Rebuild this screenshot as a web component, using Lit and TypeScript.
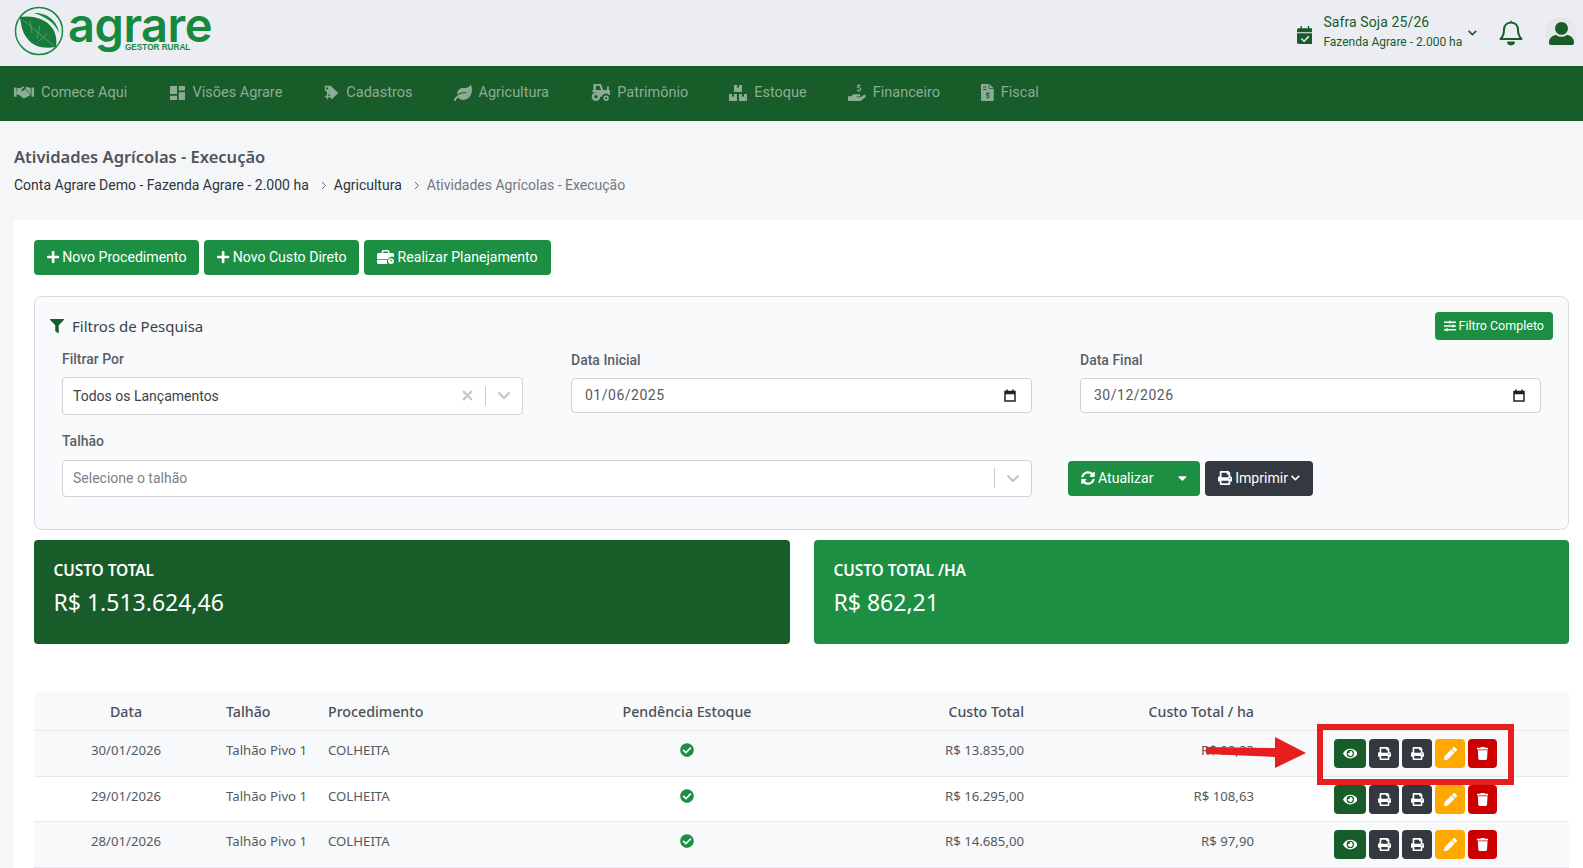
import { LitElement, html, css, svg } from "lit";
import { customElement } from "lit/decorators.js";

const P = {
  plus: ["0 0 448 512", "M416 208H272V64c0-17.67-14.33-32-32-32h-32c-17.67 0-32 14.33-32 32v144H32c-17.67 0-32 14.33-32 32v32c0 17.67 14.33 32 32 32h144v144c0 17.67 14.33 32 32 32h32c17.67 0 32-14.33 32-32V304h144c17.67 0 32-14.33 32-32v-32c0-17.67-14.33-32-32-32z"],
  print: ["0 0 512 512", "M448 192V77.25c0-8.49-3.37-16.62-9.37-22.63L393.37 9.37c-6-6-14.14-9.37-22.63-9.37H96C78.33 0 64 14.33 64 32v160c-35.35 0-64 28.65-64 64v112c0 8.84 7.16 16 16 16h48v96c0 17.67 14.33 32 32 32h320c17.67 0 32-14.33 32-32v-96h48c8.84 0 16-7.16 16-16V256c0-35.35-28.65-64-64-64zm-64 256H128v-96h256v96zm0-224H128V64h192v48c0 8.84 7.16 16 16 16h48v96zm48 72c-13.25 0-24-10.75-24-24 0-13.26 10.75-24 24-24s24 10.74 24 24c0 13.25-10.75 24-24 24z"],
  eye: ["0 0 576 512", "M572.52 241.4C518.29 135.59 410.93 64 288 64S57.68 135.64 3.48 241.41a32.35 32.35 0 0 0 0 29.19C57.71 376.41 165.07 448 288 448s230.32-71.64 284.52-177.41a32.35 32.35 0 0 0 0-29.19zM288 400a144 144 0 1 1 144-144 143.93 143.93 0 0 1-144 144zm0-240a95.31 95.31 0 0 0-25.31 3.79 47.85 47.85 0 0 1-66.9 66.9A95.78 95.78 0 1 0 288 160z"],
  trash: ["0 0 448 512", "M432 32H312l-9.4-18.7A24 24 0 0 0 281.1 0H166.8a23.72 23.72 0 0 0-21.4 13.3L136 32H16A16 16 0 0 0 0 48v32a16 16 0 0 0 16 16h416a16 16 0 0 0 16-16V48a16 16 0 0 0-16-16zM53.2 467a48 48 0 0 0 47.9 45h245.8a48 48 0 0 0 47.9-45L416 128H32z"],
  pencil: ["0 0 512 512", "M497.9 142.1l-46.1 46.1c-4.7 4.7-12.3 4.7-17 0l-111-111c-4.7-4.7-4.7-12.3 0-17l46.1-46.1c18.7-18.7 49.1-18.7 67.9 0l60.1 60.1c18.8 18.7 18.8 49.1 0 67.9zM284.2 99.8L21.6 362.4.4 483.9c-2.9 16.4 11.4 30.6 27.8 27.8l121.5-21.3 262.6-262.6c4.7-4.7 4.7-12.3 0-17l-111-111c-4.8-4.7-12.4-4.7-17.1 0z"],
  check: ["0 0 512 512", "M504 256c0 136.967-111.033 248-248 248S8 392.967 8 256 119.033 8 256 8s248 111.033 248 248zM227.314 387.314l184-184c6.248-6.248 6.248-16.379 0-22.627l-22.627-22.627c-6.248-6.249-16.379-6.249-22.628 0L216 308.118l-70.059-70.059c-6.248-6.248-16.379-6.248-22.628 0l-22.627 22.627c-6.248 6.248-6.248 16.379 0 22.627l104 104c6.249 6.249 16.379 6.249 22.628.001z"],
  filter: ["0 0 512 512", "M487.976 0H24.028C2.71 0-8.047 25.866 7.058 40.971L192 225.941V432c0 7.831 3.821 15.17 10.237 19.662l80 55.98C298.02 518.69 320 507.493 320 487.98V225.941l184.947-184.97C520.021 25.896 509.338 0 487.976 0z"],
  sliders: ["0 0 512 512", "M496 384H160v-16c0-8.8-7.2-16-16-16h-32c-8.8 0-16 7.2-16 16v16H16c-8.8 0-16 7.2-16 16v32c0 8.8 7.2 16 16 16h80v16c0 8.8 7.2 16 16 16h32c8.8 0 16-7.2 16-16v-16h336c8.8 0 16-7.2 16-16v-32c0-8.8-7.2-16-16-16zm0-160h-80v-16c0-8.8-7.2-16-16-16h-32c-8.8 0-16 7.2-16 16v16H16c-8.8 0-16 7.2-16 16v32c0 8.8 7.2 16 16 16h336v16c0 8.8 7.2 16 16 16h32c8.8 0 16-7.2 16-16v-16h80c8.8 0 16-7.2 16-16v-32c0-8.8-7.2-16-16-16zm0-160H288V48c0-8.8-7.2-16-16-16h-32c-8.8 0-16 7.2-16 16v16H16C7.2 64 0 71.2 0 80v32c0 8.8 7.2 16 16 16h208v16c0 8.8 7.2 16 16 16h32c8.8 0 16-7.2 16-16v-16h208c8.8 0 16-7.2 16-16V80c0-8.8-7.2-16-16-16z"],
  sync: ["0 0 512 512", "M370.72 133.28C339.458 104.008 298.888 87.962 255.848 88c-77.458.068-144.328 53.178-162.791 126.85-1.344 5.363-6.122 9.15-11.651 9.15H24.103c-7.498 0-13.194-6.807-11.807-14.176C33.933 94.924 134.813 8 256 8c66.448 0 126.791 26.136 171.315 68.685L463.03 40.97C478.149 25.851 504 36.559 504 57.941V192c0 13.255-10.745 24-24 24H345.941c-21.382 0-32.09-25.851-16.971-40.971l41.75-41.749zM32 296h134.059c21.382 0 32.09 25.851 16.971 40.971l-41.75 41.75c31.262 29.273 71.835 45.319 114.876 45.28 77.418-.07 144.315-53.144 162.787-126.849 1.344-5.363 6.122-9.15 11.651-9.15h57.304c7.498 0 13.194 6.807 11.807 14.176C478.067 417.076 377.187 504 256 504c-66.448 0-126.791-26.136-171.315-68.685L48.97 471.03C33.851 486.149 8 475.441 8 454.059V320c0-13.255 10.745-24 24-24z"],
  chevron: ["0 0 448 512", "M207.029 381.476L12.686 187.132c-9.373-9.373-9.373-24.569 0-33.941l22.667-22.667c9.357-9.357 24.522-9.375 33.901-.04L224 284.505l154.745-154.021c9.379-9.335 24.544-9.317 33.901.04l22.667 22.667c9.373 9.373 9.373 24.569 0 33.941L240.971 381.476c-9.373 9.372-24.569 9.372-33.942 0z"],
  caret: ["0 0 320 512", "M31.3 192h257.3c17.8 0 26.7 21.5 14.1 34.1L174.1 354.8c-7.8 7.8-20.5 7.8-28.3 0L17.2 226.1C4.6 213.5 13.5 192 31.3 192z"],
  leaf: ["0 0 576 512", "M546.2 9.7c-5.6-12.5-21.6-13-28.3-1.2C486.9 62.4 431.4 96 368 96h-80C182 96 96 182 96 288c0 7 .8 13.7 1.5 20.5C161.3 262.8 253.4 224 384 224c8.8 0 16 7.2 16 16s-7.2 16-16 16C132.6 256 26 410.1 2.4 468c-6.6 16.3 1.2 34.9 17.5 41.6 16.4 6.8 35-1.1 41.8-17.3 1.5-3.6 20.9-47.9 71.9-90.6 32.4 43.9 94 85.8 174.9 77.2C465.5 467.5 576 326.7 576 154.3c0-50.2-10.8-102.2-29.8-144.6z"],
  boxes: ["0 0 576 512", "M560 288h-80v96l-32-21.3-32 21.3v-96h-80c-8.8 0-16 7.2-16 16v192c0 8.8 7.2 16 16 16h224c8.8 0 16-7.2 16-16V304c0-8.8-7.2-16-16-16zm-384-64h224c8.8 0 16-7.2 16-16V16c0-8.8-7.2-16-16-16h-80v96l-32-21.3L256 96V0h-80c-8.8 0-16 7.2-16 16v192c0 8.8 7.2 16 16 16zm64 64h-80v96l-32-21.3L96 384v-96H16c-8.8 0-16 7.2-16 16v192c0 8.8 7.2 16 16 16h224c8.8 0 16-7.2 16-16V304c0-8.8-7.2-16-16-16z"],
  handshake: ["0 0 24 18", "M0 3h3v11H0zM21 3h3v11h-3zM4 3.5h4l3-1.8 2 .3-4 3.6c-.8 1 .5 2.3 1.6 1.6L13 5l6.2 6.3.8 1H19l-1 1.3-1-.4-.8 1.3-1.3-.3-.9 1.3-1.2-.3-1.2 1-5-4-3-.7-.6-.2zM15 2l5 1.5V11h-.4L13.5 4.4z"],
  grid: ["0 0 18 16", "M0 0h8v9H0zM10 0h8v5h-8zM0 11h8v5H0zM10 7h8v9h-8z"],
  tag: ["0 0 18 18", "M1 1h7l9 8.5-7.5 7.5L7 14.5V11H3.6V8.4L1 6zM5 4a1.2 1.2 0 1 0 0 .1zM1 13h2.4v-2.2h1.6V13h2.2v1.600H5v2.400H3.400v-2.400H1z"],
  tractor: ["0 0 24 20", "M6 0h7l2.600 7H20V3h2.200v4.400H24V13h-1.600a5 5 0 0 0-8.600 2H12a7 7 0 0 0-9-5V7h1V1.400C4 .6 5 0 6 0zm1 2v5h6l-1.900-5zM7 10a5 5 0 1 1 0 10 5 5 0 0 1 0-10zm0 3a2 2 0 1 0 0 4 2 2 0 0 0 0-4zM19 13.500a3.200 3.200 0 1 1 0 6.400 3.200 3.200 0 0 1 0-6.400zm0 2a1.200 1.200 0 1 0 0 2.400 1.200 1.200 0 0 0 0-2.400z"],
  hand: ["0 0 20 20", "M11.600 0h1.200v1a2.400 2.400 0 0 1 1.700 1l-.9.8c-.7-.8-2.400-.8-2.400.1 0 1.200 3.500.7 3.500 2.900 0 1-.7 1.700-1.900 1.900v1h-1.200v-1a2.700 2.700 0 0 1-1.900-1.100l.9-.8c.7 1 2.800 1 2.800-.1 0-1.200-3.500-.6-3.500-2.900 0-1 .7-1.700 1.800-1.900zM0 13.500h3.300l1.800-1.400c.9-.7 2-.7 2.900-.7h4.500c1.500 0 1.500 2.500 0 2.500H9.600v.9h4l4-2.600c1.600-.9 3 1.100 1.700 2.200l-4.500 3.800c-.5.4-1 .6-1.600.6H0z"],
  file: ["0 0 15 20", "M0 1.200C0 .5.5 0 1.200 0H9v5a1 1 0 0 0 1 1h5v12.800c0 .7-.5 1.200-1.200 1.200H1.200C.5 20 0 19.500 0 18.800zM10 0l5 5h-5zM2.500 3v1.200h4V3zm0 3v1.200h4V6zm5 3.300v1.100c-1 .2-1.700.9-1.700 1.800 0 2 3.100 1.500 3.100 2.500 0 .8-1.800.7-2.500-.1l-.8.8c.5.5 1.100.8 1.900.9v1.100h1.100v-1.100c1.100-.2 1.700-.9 1.700-1.800 0-2-3.100-1.500-3.100-2.500 0-.7 1.500-.7 2.200 0l.8-.8a2.400 2.400 0 0 0-1.600-.8V9.300z"],
  brief: ["0 0 22 18", "M8 0h6a2 2 0 0 1 2 2v2h4a2 2 0 0 1 2 2v3a6.500 6.500 0 0 0-8 3H0V6a2 2 0 0 1 2-2h4V2a2 2 0 0 1 2-2zm0 2v2h6V2zM0 13h13a6.500 6.500 0 0 0 .6 5H2a2 2 0 0 1-2-2zM18 10.500a3.750 3.750 0 1 1 0 7.500 3.750 3.750 0 0 1 0-7.500zm-.6 1.500v2.600h2.600v-1.100h-1.500V12z"],
  bell: ["0 0 22 26", ""],
  user: ["0 0 26 26", "M13 1a6.700 6.700 0 1 1 0 13.400A6.700 6.700 0 0 1 13 1zM7.500 14.500a8.600 8.600 0 0 0 11 0C23 15.200 26 18 26 22v.8c0 1.200-1 2.200-2.200 2.200H2.200A2.200 2.200 0 0 1 0 22.800V22c0-4 3-6.800 7.500-7.500z"],
  cal: ["0 0 448 512", "M100 0h40v64h168V0h40v64h52c26 0 48 22 48 48v64H0v-64c0-26 22-48 48-48h52zM0 208h448v256c0 26-22 48-48 48H48c-26 0-48-22-48-48zm322 72l-122 122-62-62-30 30 92 92 152-152z"],
};
type IconName = keyof typeof P;

const ic = (n: IconName, cls = "") => html`<svg class="ic ${cls}" viewBox=${P[n][0]} aria-hidden="true"><path d=${P[n][1]} fill="currentColor"></path></svg>`;

const NAV: [IconName, string, string][] = [
  ["handshake", "Comece Aqui", "i1"],
  ["grid", "Visões Agrare", "i2"],
  ["tag", "Cadastros", "i3"],
  ["leaf", "Agricultura", "i4"],
  ["tractor", "Patrimônio", "i5"],
  ["boxes", "Estoque", "i6"],
  ["hand", "Financeiro", "i7"],
  ["file", "Fiscal", "i8"],
];

const ROWS = [
  ["30/01/2026", "R$ 13.835,00", "R$ 92,23"],
  ["29/01/2026", "R$ 16.295,00", "R$ 108,63"],
  ["28/01/2026", "R$ 14.685,00", "R$ 97,90"],
];

const thinChevron = svg`<svg width="14" height="9" viewBox="0 0 14 9" aria-hidden="true"><path d="M1.500 1.500L7 7l5.500-5.500" fill="none" stroke="#c4c4c4" stroke-width="2"></path></svg>`;
const sepChevron = svg`<svg width="6" height="9" viewBox="0 0 6 9" aria-hidden="true"><path d="M1 1l3.500 3.500L1 8" fill="none" stroke="#6a6f76" stroke-width="1"></path></svg>`;

@customElement("app-root")
export class AppRoot extends LitElement {
  static styles = css`
    :host { display: block; height: 868px; overflow: hidden; position: relative; background: #f5f6f8; font-family: Roboto, sans-serif; color: #363b44; font-size: 14px; }
    * { box-sizing: border-box; }
    .ic { display: block; flex: none; height: 1em; width: auto; }
    header { height: 66px; background: #ecedf2; display: flex; align-items: center; padding: 0 6px 0 14px; }
    .logo { display: flex; align-items: flex-start; position: relative; height: 60px; width: 205px; margin-top: -6px; }
    .logo svg { width: 50px; height: 50px; margin-top: 6px; flex: none; }
    .word { font-family: Inter, sans-serif; font-weight: 600; font-size: 47px; line-height: 40px; height: 40px; margin-top: 5px; letter-spacing: -0.5px; color: #17893f; margin-left: 4px; }
    .sub { position: absolute; left: 111px; top: 43px; font-family: "Liberation Sans", sans-serif; font-weight: 700; font-size: 8.2px; color: #17893f; line-height: 10px; }
    .right { margin-left: auto; display: flex; align-items: center; color: #185c2a; }
    .right .cal { font-size: 18px; margin-right: 11px; margin-top: 4px; }
    .safra { display: flex; flex-direction: column; margin-top: -3px; }
    .s1 { font-size: 14px; line-height: 20px; letter-spacing: .1px; }
    .s2 { font-size: 12px; line-height: 20px; }
    .chev { font-size: 10px; margin: 0 22px 0 6px; }
    .bell { width: 24px; height: 26px; margin-right: 22px; }
    .avatar { width: 32px; height: 32px; border-radius: 50%; background: #e6e7ea; display: flex; align-items: center; justify-content: center; font-size: 25px; }
    nav { height: 55px; background: #185c2a; display: flex; align-items: center; padding: 0 0 2px 14px; color: #8dac96; font-size: 14.5px; gap: 41px; }
    .ni { display: flex; align-items: center; gap: 7px; }
    .ni:nth-child(1) { margin-right: 1.5px; }
    .ni:nth-child(2) { margin-right: 1px; }
    .i1 { font-size: 15px; } .i2 { font-size: 14px; } .i3 { font-size: 15px; } .i4 { font-size: 16px; } .i5 { font-size: 17px; } .i6 { font-size: 16px; } .i7 { font-size: 18px; } .i8 { font-size: 17px; }
    .head { padding: 25px 14px 0; height: 99px; }
    h1 { margin: 0; font-size: 16.5px; font-weight: 600; line-height: 22px; color: #4f545c; font-family: "Noto Sans", sans-serif; }
    .crumbs { display: flex; align-items: center; margin-top: 7px; font-size: 14px; line-height: 20px; color: #30343a; }
    .crumbs svg { margin: 0 7px 0 12px; display: block; }
    .crumbs .cur { color: #73777f; }
    main { margin-left: 14px; background: #fff; height: 648px; padding: 20px 14px 0 20px; }
    .acts { display: flex; gap: 5px; }
    .btn { display: inline-flex; align-items: center; gap: 3px; height: 35px; padding: 0 13px 1px; border-radius: 4px; background: #1c8f43; color: #fff; font-size: 14.1px; white-space: nowrap; }
    .btn .ic { font-size: 14px; }
    .btn.dark { background: #343840; }
    .box { margin-top: 21px; height: 234px; border: 1px solid #d6dbe3; border-radius: 8px; background: #f9fafc; padding: 14px 15px 0 15px; }
    .boxhead { display: flex; justify-content: space-between; align-items: center; height: 30px; }
    .boxtitle { display: flex; align-items: center; gap: 8px; font-family: "Noto Sans", sans-serif; font-size: 15px; color: #3c4149; }
    .boxtitle .ic { color: #185c2a; font-size: 14px; }
    .btn.sm { height: 28px; padding: 0 9px 1px 8.5px; font-size: 12.5px; gap: 3px; }
    .btn.sm .ic { font-size: 12px; }
    .form { display: grid; grid-template-columns: 461px 461px 461px; column-gap: 48px; padding: 0 0 0 12px; margin-top: 8px; }
    .f { display: flex; flex-direction: column; }
    .f.dt { padding-top: 1px; }
    label { font-size: 14px; line-height: 20px; color: #5a5f68; font-weight: 500; height: 20px; margin-bottom: 8px; }
    .wide label { margin-bottom: 9px; }
    .ctl { height: 37.5px; background: #fff; border: 1px solid #cfd2d6; border-radius: 4px; display: flex; align-items: center; padding-left: 10px; font-size: 14px; color: #3c4048; }
    .ctl.date { height: 35px; padding: 0 15px 1px 13px; justify-content: space-between; letter-spacing: .5px; color: #565a62; }
    .ph { color: #7d8085; }
    .clear { margin-left: auto; width: 11px; height: 11px; color: #c2c2c2; margin-right: 12px; }
    .div { width: 1px; height: 20px; background: #ccc; margin-right: 11px; }
    .div.first { margin-left: auto; }
    .dn { width: 14px; margin-right: 11px; display: flex; }
    .wide { grid-column: 1 / 3; margin-top: 16px; }
    .row2 { grid-column: 3; margin-top: 46px; display: flex; gap: 5px; margin-left: -12px; }
    .sp { display: inline-block; width: 19px; }
    .btn .ic.mini { font-size: 10px; }
    .cards { display: grid; grid-template-columns: 756px 755px; gap: 24px; margin-top: 10px; }
    .card { height: 104px; border-radius: 4px; padding: 20px 19.5px; color: #fff; background: #185c2a; }
    .card.alt { background: #1c8f43; }
    .ct { font-family: "Noto Sans", sans-serif; font-size: 15.5px; font-weight: 600; line-height: 20px; letter-spacing: -0.1px; }
    .cv { font-family: "Noto Sans", sans-serif; font-size: 23px; line-height: 32px; margin-top: 6px; }
    .tbl { margin-top: 48px; font-family: "Noto Sans", sans-serif; }
    .tr { display: grid; grid-template-columns: 184px 102px 231px 272px 209px 230px 1fr; align-items: center; border-bottom: 1px solid #e6e8ec; height: 45.7px; font-size: 13.2px; color: #555a62; }
    .tr.th { height: 39px; background: #f8f9fa; font-size: 14.2px; font-weight: 500; color: #4b5058; }
    .tr.odd { background: #f8f9fa; }
    .tr > div { padding: 0 8px; }
    .tr:not(.th) > div:not(.ops) { margin-bottom: 7px; }
    .c { text-align: center; }
    .r { text-align: right; }
    .ok { color: #1c8f43; font-size: 14px; display: flex; justify-content: center; }
    .ops { display: flex; gap: 3px; padding-left: 72px !important; }
    .op { width: 30px; height: 29px; border-radius: 4px; color: #fff; display: flex; align-items: center; justify-content: center; font-size: 13px; background: #343840; }
    .op.v { width: 32px; background: #185c2a; }
    .op.e { background: #ffa900; }
    .op.d { width: 29px; background: #cc0000; }
    .mark { position: absolute; left: 1317px; top: 724px; width: 197px; height: 61px; border: 6px solid #e61e1e; pointer-events: none; }
    .arrow { position: absolute; left: 1205px; top: 736px; width: 102px; height: 34px; pointer-events: none; }
  `;

  render() {
    return html`
      <header>
        <div class="logo">
          <svg viewBox="0 0 50 50" aria-hidden="true">
            <circle cx="25" cy="25" r="23.500" fill="none" stroke="#17893f" stroke-width="1.500"></circle>
            <path d="M6 11c12-2 26 1 33 12 3 5 4 12 3 18-12 2-23 0-29-9C8 26 7 18 6 11z" fill="#17793a"></path>
            <path d="M9 14l31 26M16 15l2 12M26 19l-3 14M33 28l-8 7" stroke="#7fc79a" stroke-width=".5" fill="none"></path>
            <path d="M20 7c12-1 24 8 25 20-4-10-13-16-25-20z" fill="#17893f"></path>
          </svg>
          <span class="word">agrare</span>
          <span class="sub">GESTOR RURAL</span>
        </div>
        <div class="right">
          ${ic("cal", "cal")}
          <div class="safra"><span class="s1">Safra Soja 25/26</span><span class="s2">Fazenda Agrare - 2.000 ha</span></div>
          ${ic("chevron", "chev")}
          <svg class="bell" viewBox="0 0 24 26" aria-hidden="true"><path d="M12 2.500c-4.500 0-7 3.500-7 7.500 0 5-1.500 7-3.500 9h21c-2-2-3.500-4-3.500-9 0-4-2.500-7.500-7-7.500z" fill="none" stroke="currentColor" stroke-width="2" stroke-linejoin="round"></path><path d="M12 .5v2M8.500 22h7a3.500 3 0 0 1-7 0z" fill="currentColor" stroke="currentColor" stroke-width="1"></path></svg>
          <div class="avatar">${ic("user")}</div>
        </div>
      </header>
      <nav>${NAV.map(([i, t, c]) => html`<div class="ni"><span class=${c}>${ic(i)}</span><span>${t}</span></div>`)}</nav>
      <div class="head">
        <h1>Atividades Agrícolas - Execução</h1>
        <div class="crumbs"><span>Conta Agrare Demo - Fazenda Agrare - 2.000 ha</span>${sepChevron}<span>Agricultura</span>${sepChevron}<span class="cur">Atividades Agrícolas - Execução</span></div>
      </div>
      <main>
        <div class="acts">
          <span class="btn">${ic("plus")}Novo Procedimento</span>
          <span class="btn">${ic("plus")}Novo Custo Direto</span>
          <span class="btn">${ic("brief")}Realizar Planejamento</span>
        </div>
        <section class="box">
          <div class="boxhead">
            <div class="boxtitle">${ic("filter")}Filtros de Pesquisa</div>
            <span class="btn sm">${ic("sliders")}Filtro Completo</span>
          </div>
          <div class="form">
            <div class="f"><label>Filtrar Por</label>
              <div class="ctl"><span>Todos os Lançamentos</span>
                <svg class="clear" viewBox="0 0 11 11" aria-hidden="true"><path d="M1 1l9 9M10 1l-9 9" stroke="currentColor" stroke-width="2"></path></svg>
                <span class="div"></span><span class="dn">${thinChevron}</span></div></div>
            <div class="f dt"><label>Data Inicial</label><div class="ctl date"><span>01/06/2025</span>${this.calendar()}</div></div>
            <div class="f dt"><label>Data Final</label><div class="ctl date"><span>30/12/2026</span>${this.calendar()}</div></div>
            <div class="f wide"><label>Talhão</label>
              <div class="ctl"><span class="ph">Selecione o talhão</span><span class="div first"></span><span class="dn">${thinChevron}</span></div></div>
            <div class="row2">
              <span class="btn">${ic("sync")}Atualizar<span class="sp"></span>${ic("caret")}</span>
              <span class="btn dark">${ic("print")}Imprimir${ic("chevron", "mini")}</span>
            </div>
          </div>
        </section>
        <div class="cards">
          <div class="card"><div class="ct">CUSTO TOTAL</div><div class="cv">R$ 1.513.624,46</div></div>
          <div class="card alt"><div class="ct">CUSTO TOTAL /HA</div><div class="cv">R$ 862,21</div></div>
        </div>
        <div class="tbl">
          <div class="tr th"><div class="c">Data</div><div>Talhão</div><div>Procedimento</div><div class="c">Pendência Estoque</div><div class="r">Custo Total</div><div class="r">Custo Total / ha</div><div></div></div>
          ${ROWS.map((r, i) => html`<div class="tr ${i % 2 ? "" : "odd"}">
            <div class="c">${r[0]}</div><div>Talhão Pivo 1</div><div>COLHEITA</div>
            <div class="ok">${ic("check")}</div><div class="r">${r[1]}</div><div class="r">${r[2]}</div>
            <div class="ops"><span class="op v">${ic("eye")}</span><span class="op">${ic("print")}</span><span class="op">${ic("print")}</span><span class="op e">${ic("pencil")}</span><span class="op d">${ic("trash")}</span></div>
          </div>`)}
        </div>
      </main>
      <div class="mark"></div>
      <svg class="arrow" viewBox="0 0 102 34" aria-hidden="true"><path d="M1 11L70 12V1l31 16-31 15V21L1 18z" fill="#e61e1e"></path></svg>
    `;
  }

  calendar() {
    return svg`<svg width="12" height="13" viewBox="0 0 12 13" aria-hidden="true"><path d="M1 2.500h10v9.500H1z" fill="none" stroke="#222" stroke-width="1.500"></path><path d="M1 4h10" stroke="#222" stroke-width="2.500"></path><path d="M3 .5v2M9 .5v2" stroke="#222" stroke-width="1.500"></path></svg>`;
  }
}
